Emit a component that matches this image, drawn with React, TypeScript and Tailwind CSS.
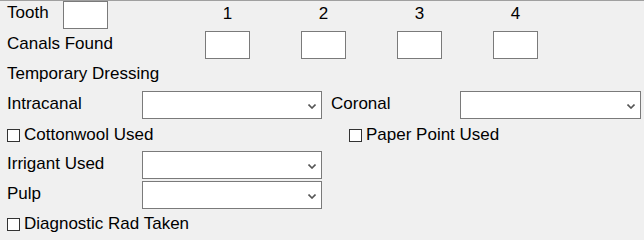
import React from "react";

const font = { fontFamily: '"Liberation Sans", Arial, sans-serif' };

const TextBox = () => <div className="w-[45px] h-[28px] bg-white border border-[#7a7a7a]" />;

const Chevron = () => (
  <svg width="8" height="5" viewBox="0 0 8 5" className="absolute right-[5px] top-[12px]">
    <polyline points="0.5,0.5 4,4 7.5,0.5" fill="none" stroke="#555" strokeWidth="1.6" />
  </svg>
);

const Combo = ({ w }: { w: string }) => (
  <div className={`relative h-[28px] bg-white border border-[#7a7a7a] ${w}`}>
    <Chevron />
  </div>
);

const Check = ({ label }: { label: string }) => (
  <div className="flex items-center">
    <div className="w-[13px] h-[13px] bg-white border border-[#333]" />
    <span className="ml-[4px]">{label}</span>
  </div>
);

const Label = ({ text, w }: { text: string; w: string }) => (
  <span className={`pb-[2px] ${w}`}>{text}</span>
);

export default function App() {
  return (
    <div
      className="w-[644px] h-[240px] bg-[#f0f0f0] border-t border-[#a0a0a0] text-[17px] leading-[20px] text-black overflow-hidden"
      style={font}
    >
      <div className="pl-[7px]">
        {/* tooth + column numbers */}
        <div className="flex items-center h-[28px]">
          <span className="w-[56px] pb-[4px]">Tooth</span>
          <TextBox />
          <div className="flex gap-[51px] ml-[97px]">
            {["1", "2", "3", "4"].map((n) => (
              <span key={n} className="w-[45px] text-center pb-[2px]">
                {n}
              </span>
            ))}
          </div>
        </div>

        <div className="flex items-center h-[28px] mt-[2px]">
          <span className="w-[198px] pb-[3px]">Canals Found</span>
          <div className="flex gap-[51px]">
            <TextBox />
            <TextBox />
            <TextBox />
            <TextBox />
          </div>
        </div>

        <div className="flex items-center h-[28px] mt-[2px]">
          <span className="pb-[2px]">Temporary Dressing</span>
        </div>

        <div className="flex items-center h-[28px] mt-[2px]">
          <Label text="Intracanal" w="w-[135px]" />
          <Combo w="w-[180px]" />
          <Label text="Coronal" w="w-[129px] ml-[9px]" />
          <Combo w="w-[181px]" />
        </div>

        <div className="flex items-center h-[32px]">
          <div className="w-[342px]">
            <Check label="Cottonwool Used" />
          </div>
          <Check label="Paper Point Used" />
        </div>

        <div className="flex items-center h-[28px]">
          <Label text="Irrigant Used" w="w-[135px]" />
          <Combo w="w-[180px]" />
        </div>

        <div className="flex items-center h-[28px] mt-[2px]">
          <Label text="Pulp" w="w-[135px]" />
          <Combo w="w-[180px]" />
        </div>

        <div className="flex items-center h-[30px]">
          <Check label="Diagnostic Rad Taken" />
        </div>
      </div>
    </div>
  );
}
